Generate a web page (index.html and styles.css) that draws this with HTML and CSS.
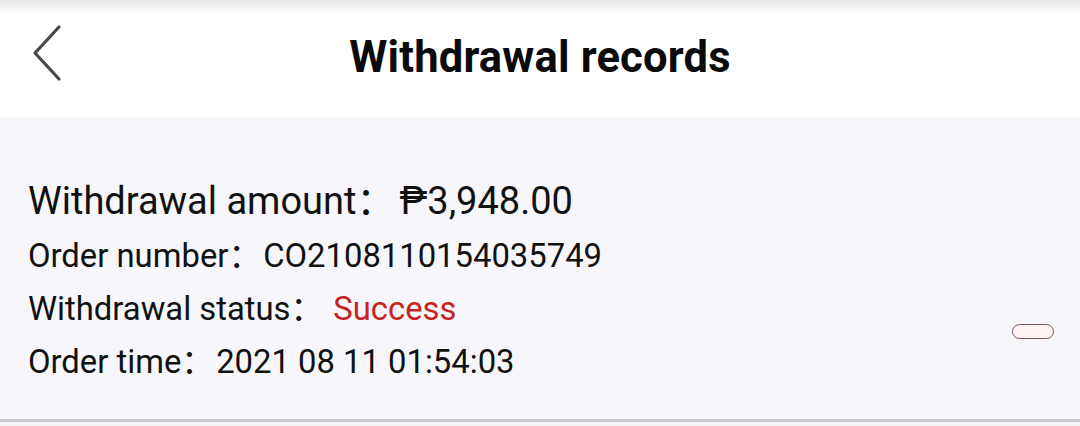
FILE: index.html
```html
<!DOCTYPE html>
<html lang="en">
<head>
    <meta charset="UTF-8">
    <meta name="viewport" content="width=device-width, initial-scale=1.0">
    <title>Withdrawal records</title>
    <link rel="stylesheet" href="styles.css">
</head>
<body>
    <div class="status-strip"></div>
    <header class="nav">
        <button class="back" aria-label="Back">
            <svg width="34" height="58" viewBox="0 0 34 58">
                <path d="M29 3 L5 29 L29 55" fill="none" stroke="#474747" stroke-width="3.2" stroke-linecap="round" stroke-linejoin="round"/>
            </svg>
        </button>
        <h1>Withdrawal records</h1>
    </header>

    <div class="record">
        <div class="info">
            <p class="amount">Withdrawal amount：<span class="value">₱3,948.00</span></p>
            <p class="row">Order number：<span class="value">CO2108110154035749</span></p>
            <p class="row">Withdrawal status：<span class="value success">Success</span></p>
            <p class="row">Order time：<span class="value">2021 08 11 01:54:03</span></p>
        </div>
        <span class="pill"></span>
    </div>
</body>
</html>
```

FILE: styles.css
```css
body {
    margin: 0;
    padding: 0;
    font-family: Roboto, "Noto Sans CJK SC", "Noto Sans", Arial, sans-serif;
    background-color: #f4f4f6;
    color: #111;
    height: 426px;
    overflow: hidden;
}

.status-strip {
    height: 12px;
    background: linear-gradient(#e6e6e6, #fafafa);
}

.nav {
    position: relative;
    height: 105px;
    background-color: #fff;
    display: flex;
    align-items: center;
    justify-content: center;
}

.nav h1 {
    margin: 0;
    font-size: 43.5px;
    font-weight: bold;
    color: #0a0a0a;
    letter-spacing: 0.2px;
    padding-bottom: 14px;
}

.back {
    position: absolute;
    left: 30px;
    top: 12px;
    padding: 0;
    border: none;
    background: none;
}

.record {
    height: 305px;
    box-sizing: border-box;
    padding: 56px 26px 0 28px;
    display: flex;
    justify-content: space-between;
    align-items: flex-start;
    background-color: #f7f7fb;
    border-bottom: 3px solid #cbcbcf;
}

.info p {
    margin: 0;
    white-space: nowrap;
}

.amount {
    font-size: 38px;
    line-height: 57px;
}

.amount .value {
    margin-left: 5px;
}

.row {
    font-size: 32.8px;
    line-height: 53px;
}

.value {
    margin-left: 2px;
}

.success {
    color: #c8241f;
    margin-left: 10px;
}

.pill {
    width: 40px;
    height: 13px;
    margin-top: 151px;
    border: 1.5px solid #7a5556;
    border-radius: 8px;
    background-color: #fff3f4;
}
```
